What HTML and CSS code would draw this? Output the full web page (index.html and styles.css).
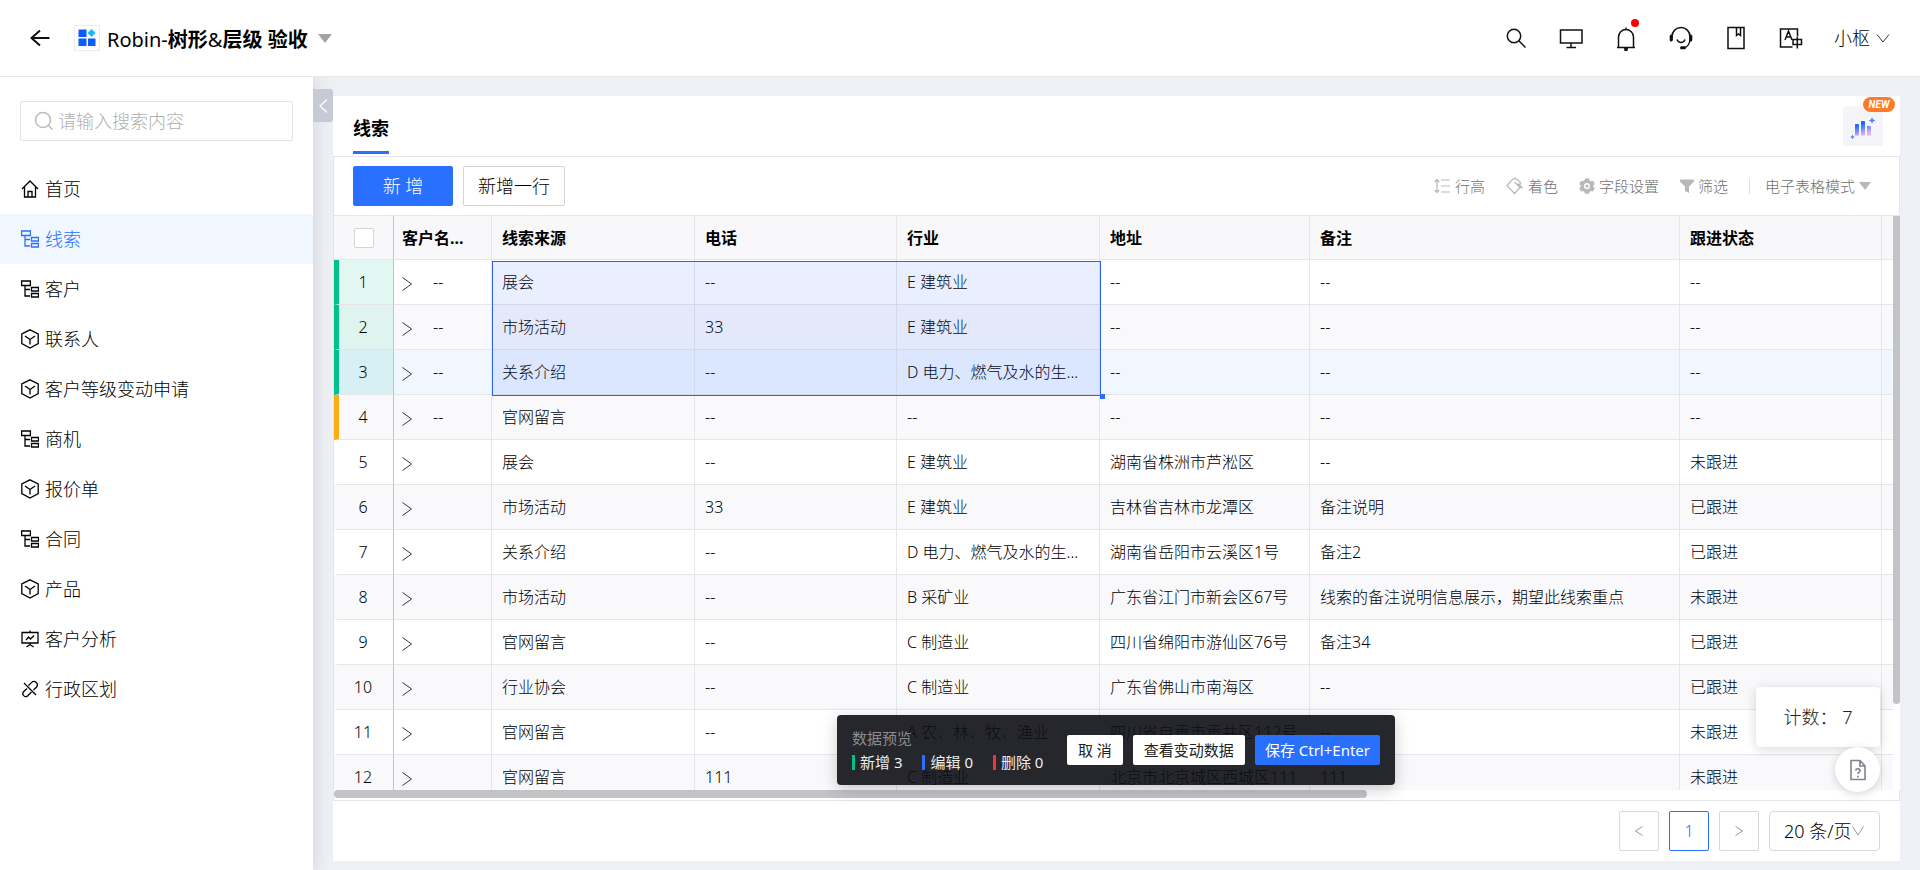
FILE: index.html
```html
<!DOCTYPE html>
<html lang="zh-CN">
<head>
<meta charset="utf-8">
<title>Robin-树形&amp;层级 验收</title>
<link rel="stylesheet" href="styles.css">
</head>
<body>
<svg class="sprite" aria-hidden="true">
  <symbol id="i-tree" viewBox="0 0 18 18"><path d="M.6 1h8.800v4.500H.6zM4 5.500V16h5M4 9.500h5M10.500 7.500h7v3.500h-7zM10.500 13.500h7V17h-7z"/></symbol>
  <symbol id="i-cube" viewBox="0 0 18 20"><path d="M9 .8l8.200 4.200v9.500L9 19 .8 14.500V5zM4 7l5 3.500L14 7M9 10.500v5"/></symbol>
  <symbol id="i-right" viewBox="0 0 10 14"><path d="M.5.500L9.500 7l-9 6.500"/></symbol>
</svg>
<header class="topbar">
  <button class="icon-btn" aria-label="返回"><svg width="20" height="18" viewBox="0 0 20 18" class="line back"><path d="M19.500 9H1.500M10 1.500L1.500 9l8.500 7.500"/></svg></button>
  <button class="app">
    <span class="app-logo"><svg width="18" height="18" viewBox="0 0 18 18"><path fill="#0b5cff" d="M.5.500h8v7.500h-8zM.5 9.500h8v7.500h-8zM10 9.500h7.500v7.500H10z"/><path fill="#16b9ff" d="M13.500 0l4 4-4 4-4-4z"/></svg></span>
    <span class="app-name">Robin-<b>树形</b>&amp;<b>层级 验收</b></span>
    <svg width="14" height="9" viewBox="0 0 14 9"><path fill="#a3a3a3" d="M0 0h14L7 9z"/></svg>
  </button>
  <div class="tools">
    <button class="icon-btn" aria-label="搜索"><svg width="24" height="24" viewBox="0 0 24 24" class="line"><circle cx="10" cy="10" r="6.700"/><path d="M14.800 14.800l6.700 6.700"/></svg></button>
    <button class="icon-btn" aria-label="桌面"><svg width="24" height="24" viewBox="0 0 24 24" class="line"><path d="M1.500 4h21.500v13H1.500zM12 17v4M7.500 21.500h9.500"/></svg></button>
    <button class="icon-btn bell" aria-label="通知"><svg width="24" height="26" viewBox="0 0 24 26" class="line"><path d="M12 2.500v2M4.500 22.500V12a7.500 7.500 0 0 1 15 0v10.500M3 22.500h18"/><path fill="#111" stroke="none" d="M10 23h4l-.5 3h-3z"/></svg><span class="dot"></span></button>
    <button class="icon-btn" aria-label="客服"><svg width="24" height="24" viewBox="0 0 24 24" class="line"><path d="M3 14v-3.500a9 9 0 0 1 18 0V14M8 13.500c1.500 4 6.500 4 8 0M21 14c-.5 4-3 7.500-6.500 7.700"/><path class="thick" d="M2.200 10v4M21.800 10v4M12.500 21.700h3"/></svg></button>
    <button class="icon-btn" aria-label="文档"><svg width="24" height="24" viewBox="0 0 24 24" class="line"><path d="M4 1.500h16v21H4zM12.500 1.500v8l2-1.500 2 1.500v-8"/></svg></button>
    <button class="icon-btn" aria-label="语言"><svg width="24" height="24" viewBox="0 0 24 24" class="line"><path d="M13.500 21H1.500V3h17v7M6 14l3.500-9 3.500 9M7 11h5M14 13.500h8.500v5H14zM18.300 10.500v12"/></svg></button>
    <button class="user">小枢<svg width="14" height="9" viewBox="0 0 14 9" class="thin"><path d="M1 .5l6 7.500 6-7.500"/></svg></button>
  </div>
</header>
<div class="body">
  <aside class="side">
    <label class="search"><svg width="20" height="20" viewBox="0 0 20 20"><circle cx="9" cy="9" r="7.500"/><path d="M14.500 14.500l4 4"/></svg><input type="text" placeholder="请输入搜索内容" aria-label="搜索菜单"></label>
    <nav class="menu">
      <a href="#"><svg viewBox="0 0 18 18"><path d="M1 9l8-8 8 8M3.500 7v10h11V7M7 17v-5.500h4V17"/></svg>首页</a>
      <a href="#" class="on"><svg><use href="#i-tree"/></svg>线索</a>
      <a href="#"><svg><use href="#i-tree"/></svg>客户</a>
      <a href="#"><svg class="tall"><use href="#i-cube"/></svg>联系人</a>
      <a href="#"><svg class="tall"><use href="#i-cube"/></svg>客户等级变动申请</a>
      <a href="#"><svg><use href="#i-tree"/></svg>商机</a>
      <a href="#"><svg class="tall"><use href="#i-cube"/></svg>报价单</a>
      <a href="#"><svg><use href="#i-tree"/></svg>合同</a>
      <a href="#"><svg class="tall"><use href="#i-cube"/></svg>产品</a>
      <a href="#"><svg viewBox="0 0 18 18"><path d="M1 2.500h16v10.500H1zM9 .5v2M5 10l2.500-3 2 2L13 5.500M9 13v2M5.500 17L9 14.500l3.500 2.500"/></svg>客户分析</a>
      <a href="#"><svg viewBox="0 0 18 18"><path d="M3 3l12 12M6 8.500L2.800 11.500a2.900 2.900 0 0 0 4 4.200l3.700-3.700M7.500 5.500L10.500 2.600a3.300 3.300 0 0 1 4.800 4.700L12.500 10"/></svg>行政区划</a>
    </nav>
  </aside>
  <button class="fold" aria-label="收起"><svg width="9" height="14" viewBox="0 0 9 14"><path d="M8 .5L1 7l7 6.500"/></svg></button>
  <main class="card">
    <div class="tabs">
      <a href="#" class="tab">线索</a>
      <button class="ai" aria-label="智能分析"><svg width="26" height="26" viewBox="0 0 26 26"><defs><linearGradient id="g" x1="0" y1="0" x2=".4" y2="1"><stop offset=".3" stop-color="#1a66ff"/><stop offset="1" stop-color="#dcb4fa"/></linearGradient></defs><path fill="url(#g)" d="M5 9q0-1 1-1h2q1 0 1 1v10.500H5zM11 6q0-1 1-1h2q1 0 1 1v13.500h-4zM17 11q0-1 1-1h2q1 0 1 1v8.500h-4z"/><path fill="#5b7cf5" d="M22 1l1 2.500 2.500 1-2.500 1-1 2.500-1-2.500-2.500-1 2.500-1zM2.500 18.500l.7 1.800 1.800.7-1.800.7-.7 1.800-.7-1.800L0 21l1.800-.7z"/></svg><span class="new">NEW</span></button>
    </div>
    <section class="grid">
      <div class="bar">
        <button class="btn primary">新 增</button>
        <button class="btn">新增一行</button>
        <div class="acts">
          <button><svg width="17" height="16" viewBox="0 0 17 16"><path d="M7 2h9M7 8h9M7 14h9M3 1.500v13M.8 4L3 1.500 5.200 4M.8 12L3 14.500 5.200 12"/></svg>行高</button>
          <button><svg width="18" height="18" viewBox="0 0 18 18"><path d="M5.500 3.500L1 8.500l7.500 8 7-7.500M5.500 3.500L9 1l5.500 4.500L13.500 10 11 7.500 8.500 5M12 6.500l4.500 5"/></svg>着色</button>
          <button><svg width="16" height="16" viewBox="0 0 16 16"><path class="solid" fill-rule="evenodd" d="M6 .5h4l.6 2 1.400.8 2-.5 1.800 3.200-1.500 1.500v1.300l1.500 1.500-1.800 3.200-2-.5-1.400.8-.6 2H6l-.6-2-1.400-.8-2 .5L.2 10.300l1.500-1.500V7.500L.2 6 2 2.800l2 .5 1.400-.8zM8 5a3.100 3.100 0 1 0 0 6.200 3.100 3.100 0 0 0 0-6.200zM8 6.500a1.600 1.600 0 1 1 0 3.200 1.600 1.600 0 0 1 0-3.200z"/></svg>字段设置</button>
          <button><svg width="14" height="15" viewBox="0 0 14 15"><path class="solid" d="M0 .5h14v2L9 7.500V14l-4-2V7.500l-5-5z"/></svg>筛选</button>
          <span class="sep"></span>
          <button class="mode">电子表格模式<svg width="12" height="8" viewBox="0 0 12 8"><path class="solid" d="M0 0h12L6 8z"/></svg></button>
        </div>
      </div>
      <div class="sheet">
        <div class="view">
        <table>
          <colgroup><col class="c0"><col class="c1"><col class="c2"><col class="c3"><col class="c4"><col class="c5"><col class="c6"><col class="c7"><col></colgroup>
          <thead><tr><th><input type="checkbox" aria-label="全选"></th><th>客户名...</th><th>线索来源</th><th>电话</th><th>行业</th><th>地址</th><th>备注</th><th>跟进状态</th><th></th></tr></thead>
          <tbody>
            <tr class="added"><td>1</td><td><button class="x" aria-label="展开"><svg><use href="#i-right"/></svg></button>--</td><td>展会</td><td>--</td><td>E 建筑业</td><td>--</td><td>--</td><td>--</td><td></td></tr>
            <tr class="added"><td>2</td><td><button class="x" aria-label="展开"><svg><use href="#i-right"/></svg></button>--</td><td>市场活动</td><td>33</td><td>E 建筑业</td><td>--</td><td>--</td><td>--</td><td></td></tr>
            <tr class="added hover"><td>3</td><td><button class="x" aria-label="展开"><svg><use href="#i-right"/></svg></button>--</td><td>关系介绍</td><td>--</td><td>D 电力、燃气及水的生...</td><td>--</td><td>--</td><td>--</td><td></td></tr>
            <tr class="draft"><td>4</td><td><button class="x" aria-label="展开"><svg><use href="#i-right"/></svg></button>--</td><td>官网留言</td><td>--</td><td>--</td><td>--</td><td>--</td><td>--</td><td></td></tr>
            <tr><td>5</td><td><button class="x" aria-label="展开"><svg><use href="#i-right"/></svg></button></td><td>展会</td><td>--</td><td>E 建筑业</td><td>湖南省株洲市芦淞区</td><td>--</td><td>未跟进</td><td></td></tr>
            <tr><td>6</td><td><button class="x" aria-label="展开"><svg><use href="#i-right"/></svg></button></td><td>市场活动</td><td>33</td><td>E 建筑业</td><td>吉林省吉林市龙潭区</td><td>备注说明</td><td>已跟进</td><td></td></tr>
            <tr><td>7</td><td><button class="x" aria-label="展开"><svg><use href="#i-right"/></svg></button></td><td>关系介绍</td><td>--</td><td>D 电力、燃气及水的生...</td><td>湖南省岳阳市云溪区1号</td><td>备注2</td><td>已跟进</td><td></td></tr>
            <tr><td>8</td><td><button class="x" aria-label="展开"><svg><use href="#i-right"/></svg></button></td><td>市场活动</td><td>--</td><td>B 采矿业</td><td>广东省江门市新会区67号</td><td>线索的备注说明信息展示，期望此线索重点</td><td>未跟进</td><td></td></tr>
            <tr><td>9</td><td><button class="x" aria-label="展开"><svg><use href="#i-right"/></svg></button></td><td>官网留言</td><td>--</td><td>C 制造业</td><td>四川省绵阳市游仙区76号</td><td>备注34</td><td>已跟进</td><td></td></tr>
            <tr><td>10</td><td><button class="x" aria-label="展开"><svg><use href="#i-right"/></svg></button></td><td>行业协会</td><td>--</td><td>C 制造业</td><td>广东省佛山市南海区</td><td>--</td><td>已跟进</td><td></td></tr>
            <tr><td>11</td><td><button class="x" aria-label="展开"><svg><use href="#i-right"/></svg></button></td><td>官网留言</td><td>--</td><td>A 农、林、牧、渔业</td><td>四川省自贡市贡井区112号</td><td>--</td><td>未跟进</td><td></td></tr>
            <tr><td>12</td><td><button class="x" aria-label="展开"><svg><use href="#i-right"/></svg></button></td><td>官网留言</td><td>111</td><td>C 制造业</td><td>北京市北京城区西城区111</td><td>111</td><td>未跟进</td><td></td></tr>
          </tbody>
        </table>
        <div class="selection"><span></span></div>
        </div>
        <div class="vtrack"><div class="vthumb"></div></div>
      </div>
      <div class="htrack"><div class="hthumb"></div></div>
    </section>
    <footer class="pager">
      <button aria-label="上一页"><svg width="8" height="10" viewBox="0 0 8 10"><path d="M7.500.5l-7 4.500 7 4.500"/></svg></button>
      <button class="cur">1</button>
      <button aria-label="下一页"><svg width="8" height="10" viewBox="0 0 8 10"><path d="M.5.500l7 4.500-7 4.500"/></svg></button>
      <div class="size"><select aria-label="每页条数"><option>20 条/页</option></select><svg width="12" height="10" viewBox="0 0 12 10"><path d="M.5.500L6 9l5.500-8.500"/></svg></div>
    </footer>
  </main>
</div>
<div class="preview">
  <div class="info">
    <span class="muted">数据预览</span>
    <div class="stats"><span class="g">新增 3</span><span class="b">编辑 0</span><span class="r">删除 0</span></div>
  </div>
  <div class="ops"><button>取 消</button><button>查看变动数据</button><button class="save">保存 Ctrl+Enter</button></div>
</div>
<div class="floats">
  <div class="count">计数： 7</div>
  <button class="help" aria-label="帮助"><svg width="16" height="22" viewBox="0 0 16 22"><path d="M1 1.500h9l5 5.500v13.500H1zM10 1.500V7h5M5.700 11.500c.3-2.600 4.600-2.200 4.300.3-.2 1.400-2.100 1.500-2.100 3.200M7.900 16.800v1.600"/></svg></button>
</div>
</body>
</html>
```
FILE: styles.css
```css
* { box-sizing: border-box; }
body { margin: 0; height: 100vh; display: flex; flex-direction: column; overflow: hidden; background: #eff0f5; color: #000; font: 300 16px/24px "Noto Sans", "Noto Sans CJK SC", sans-serif; }
button, input, select { font: inherit; color: inherit; }
button { padding: 0; border: 0; background: none; }
a { color: inherit; text-decoration: none; }
svg { display: block; flex: none; fill: none; }
.sprite { position: absolute; width: 0; height: 0; }
.line { stroke: #111; stroke-width: 1.5; }
.back { stroke-width: 2; }
.line .thick { stroke-width: 3; stroke-linecap: round; }
.thin { stroke: #333; }

.topbar { flex: none; height: 77px; display: flex; align-items: center; padding: 0 30px; background: #fff; border-bottom: 1px solid #e8e8e8; }
.icon-btn { position: relative; display: flex; }
.app { display: flex; align-items: center; margin-left: 24px; }
.app-logo { padding: 3px; border: 1px solid #ececec; margin-right: 7px; }
.app-name { padding-top: 3px; font-size: 20px; font-weight: 400; }
.app-name b { font-weight: 700; }
.app > svg { margin-left: 10px; }
.tools { display: flex; align-items: center; gap: 31px; margin-left: auto; }
.dot { position: absolute; top: -6px; right: -1px; width: 8px; height: 8px; border-radius: 50%; background: #f00; }
.user { display: flex; align-items: center; gap: 6px; font-size: 18px; }

.body { flex: 1; display: flex; align-items: flex-start; min-height: 0; }
.side { flex: none; width: 313px; height: 100%; padding-top: 24px; background: #fff; box-shadow: 2px 0 16px rgba(40, 50, 80, .14); clip-path: inset(0 -20px 0 0); }
.search { display: flex; align-items: center; gap: 4px; height: 40px; margin: 0 20px 23px; padding: 0 13px; border: 1px solid #e4e4e4; border-radius: 2px; }
.search svg { stroke: #bbb; stroke-width: 1.5; }
.search input { flex: 1; min-width: 0; padding: 0; border: 0; outline: 0; background: none; font-size: 18px; }
.search input::placeholder { color: #b0b0b0; }
.menu a { display: flex; align-items: center; gap: 6px; height: 50px; padding-left: 21px; font-size: 18px; }
.menu svg { width: 18px; height: 18px; stroke: currentColor; stroke-width: 1.3; }
.menu .tall { height: 20px; }
.menu .on { color: #2970ff; background: #f0f7ff; }
.fold { flex: none; display: flex; align-items: center; justify-content: center; width: 20px; height: 33px; margin-top: 12px; background: #c5cad4; border-radius: 0 3px 3px 0; z-index: 1; }
.fold svg { stroke: #fff; stroke-width: 1.3; }

.card { flex: 1; min-width: 0; align-self: stretch; display: flex; flex-direction: column; margin: 19px 20px 9px 0; background: #fff; z-index: 1; }
.tabs { flex: none; display: flex; justify-content: space-between; height: 60px; padding: 10px 17px 0 20px; }
.tab { height: 48px; padding-top: 10px; border-bottom: 3px solid #2970ff; font-size: 18px; font-weight: 700; }
.ai { position: relative; width: 40px; height: 40px; padding: 10px 7px; background: #f5f4f9; border-radius: 3px; }
.new { position: absolute; top: -9px; right: -12px; width: 32px; border-radius: 8px; background: #ff7a2b; color: #fff; font: italic 700 10px/15px Roboto, sans-serif; text-align: center; }
.grid { flex: 1; min-height: 0; display: flex; flex-direction: column; border: 1px solid #e6e6e8; }
.bar { flex: none; display: flex; align-items: center; gap: 10px; height: 58px; padding: 0 28px 0 19px; }
.btn { height: 40px; padding: 0 14px; border: 1px solid #d4d4d4; border-radius: 2px; background: #fff; font-size: 18px; }
.primary { width: 100px; border-color: #2970ff; background: #2970ff; color: #fff; }
.acts { display: flex; align-items: center; gap: 21px; margin-left: auto; color: #707070; font-size: 15px; }
.acts button { display: flex; align-items: center; gap: 4px; }
.acts svg { stroke: #b8b8b8; stroke-width: 1.2; }
.acts .solid { fill: #b8b8b8; stroke: none; }
.sep { width: 1px; height: 15px; margin-right: -6px; background: #ddd; }
.sheet { flex: 1; min-height: 0; display: flex; margin-right: -1px; border-top: 1px solid #e6e6e8; }
.view { position: relative; flex: 1; min-width: 0; overflow: hidden; }
table { width: 100%; table-layout: fixed; border-spacing: 0; }
.c0 { width: 60px; } .c1 { width: 98px; } .c2, .c4 { width: 203px; } .c3, .c7 { width: 202px; } .c5 { width: 210px; } .c6 { width: 370px; }
th, td { height: 45px; padding: 0 10px; border-right: 1px solid #e6e6e8; border-bottom: 1px solid #e6e6e8; text-align: left; white-space: nowrap; }
th { height: 44px; background: #f8f8fa; font-weight: 700; }
th:nth-child(2), td:nth-child(2) { padding: 0 8px; }
th:first-child, td:first-child { padding: 0; border-right-color: #bfc4cc; text-align: center; }
td:first-child { border-left: 5px solid transparent; padding-right: 6px; }
td:last-child, th:last-child { border-right: 0; padding: 0; }
tr:nth-child(even) td { background: #f9f9fb; }
tr.hover td { background: #f0f7ff; }
tr.added td:first-child { background: #e3f7f2; border-left-color: #00c08b; }
tr.added:nth-child(2) td:first-child { background: #dff3ef; }
tr.hover td:first-child { background: #d7f0f3; }
tr.draft td:first-child { border-left-color: #faad14; }
th input { appearance: none; display: block; width: 20px; height: 20px; margin: 0 auto; border: 1px solid #d4d4d4; border-radius: 2px; background: #fff; }
.x { display: inline-block; width: 10px; margin-right: 21px; vertical-align: middle; }
.x svg { width: 10px; height: 14px; stroke: #333; }
.selection { position: absolute; left: 158px; top: 45px; width: 609px; height: 135px; border: 1px solid #2e63f0; background: rgba(41, 98, 255, .1); }
.selection span { position: absolute; right: -5px; bottom: -4px; width: 5px; height: 5px; background: #2970ff; }
.vtrack { flex: none; width: 7px; background: #fff; }
.vthumb { height: 85%; background: #c1c3c5; border-radius: 0 0 4px 4px; }
.htrack { flex: none; height: 10px; }
.hthumb { width: 66%; height: 8px; background: #c1c3c5; border-radius: 4px; }
.pager { flex: none; display: flex; justify-content: flex-end; gap: 10px; padding: 10px 20px; }
.pager button { display: flex; align-items: center; justify-content: center; width: 40px; height: 40px; border: 1px solid #d9d9d9; border-radius: 2px; }
.pager svg { stroke: #999; }
.pager .cur { border-color: #2970ff; color: #2970ff; }
.size { display: flex; align-items: center; height: 40px; padding: 0 15px 0 14px; border: 1px solid #d9d9d9; border-radius: 4px; font-size: 18px; }
.size select { appearance: none; padding: 0; border: 0; background: none; }

.preview { position: absolute; left: 837px; bottom: 85px; width: 558px; height: 70px; display: flex; justify-content: space-between; align-items: center; padding: 0 15px; border-radius: 4px; background: rgba(14, 14, 22, .9); box-shadow: 0 4px 16px rgba(0, 0, 0, .2); color: #eee; font-size: 15px; font-weight: 400; z-index: 2; }
.muted { color: #8c8c8f; }
.stats { display: flex; gap: 20px; }
.stats span { display: flex; align-items: center; gap: 5px; }
.stats span::before { content: ""; width: 3px; height: 15px; background: currentColor; }
.stats .g::before { background: #00c08b; }
.stats .b::before { background: #2970ff; }
.stats .r::before { background: #f5323c; }
.ops { display: flex; gap: 10px; }
.ops button { height: 30px; padding: 0 11px; border-radius: 2px; background: #fff; color: #222; }
.ops .save { padding: 0 10px; background: #2970ff; color: #fff; }
.floats { position: absolute; right: 40px; bottom: 78px; display: flex; flex-direction: column; align-items: flex-end; z-index: 2; }
.count { display: flex; align-items: center; justify-content: center; width: 124px; height: 60px; border-radius: 4px; background: #fff; box-shadow: 0 2px 12px rgba(0, 0, 0, .16); color: #222; font-size: 18px; white-space: pre; }
.help { display: flex; align-items: center; justify-content: center; width: 45px; height: 45px; border-radius: 50%; background: #fff; box-shadow: 0 2px 10px rgba(0, 0, 0, .16); }
.help svg { stroke: #7d8490; stroke-width: 1.6; }
```
